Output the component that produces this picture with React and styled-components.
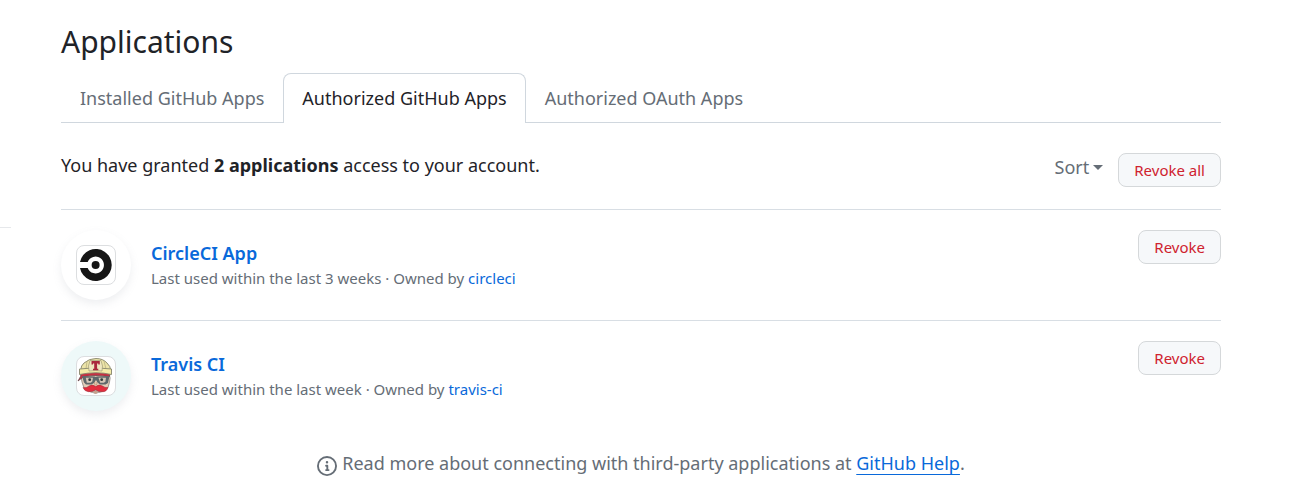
import React from "react";
import styled, { createGlobalStyle, css } from "styled-components";

const GlobalStyle = createGlobalStyle`
  *, *::before, *::after { box-sizing: border-box; }
  body {
    margin: 0;
    background: #ffffff;
    color: #1f2328;
    font-family: "Noto Sans", "Liberation Sans", sans-serif;
    font-size: 18px;
    line-height: 26px;
  }
`;

const Page = styled.div`
  display: grid;
  grid-template-columns: 11px minmax(0, 1fr);
  column-gap: 50px;
  padding-right: 93px;
`;

const SidebarEdge = styled.aside`
  padding-top: 227px;
`;

const SidebarRule = styled.hr`
  margin: 0;
  border: 0;
  border-top: 1px solid #e6e8eb;
`;

const Main = styled.main`
  padding-top: 20px;
`;

const Title = styled.h1`
  margin: 0 0 9px;
  font-size: 30px;
  font-weight: 400;
  line-height: 44px;
`;

const Tabs = styled.nav`
  display: flex;
  height: 50px;
  border-bottom: 1px solid #d0d7de;
`;

const Tab = styled.a`
  height: 50px;
  padding: 11px 18px;
  border: 1px solid transparent;
  border-bottom: 0;
  border-radius: 8px 8px 0 0;
  color: #656d76;
  text-decoration: none;
  white-space: nowrap;
  ${({ $active }) =>
    $active &&
    css`
      border-color: #d0d7de;
      background: #ffffff;
      color: #1f2328;
    `}
`;

const Summary = styled.div`
  display: flex;
  justify-content: space-between;
  align-items: flex-start;
  padding: 30px 0 22px;
`;

const SummaryText = styled.p`
  margin: 0;
  line-height: 24px;
`;

const Actions = styled.div`
  display: flex;
  align-items: center;
  gap: 15px;
`;

const SortButton = styled.button`
  display: flex;
  align-items: center;
  gap: 4px;
  padding: 0 0 6px;
  border: 0;
  background: none;
  color: #656d76;
  font: inherit;
  cursor: pointer;
`;

const Caret = styled.span`
  border: 5px solid transparent;
  border-top-color: currentColor;
  border-bottom: 0;
`;

const DangerButton = styled.button`
  height: 34px;
  padding: 0 15px;
  border: 1px solid #d5d8da;
  border-radius: 8px;
  background: #f6f8fa;
  color: #cf222e;
  font-family: inherit;
  font-size: 15px;
  line-height: 24px;
  cursor: pointer;
`;

const AppList = styled.ul`
  margin: 0;
  padding: 0;
  list-style: none;
`;

const AppRow = styled.li`
  display: flex;
  align-items: flex-start;
  padding: 20px 0;
  border-top: 1px solid #d8dee4;
`;

const Badge = styled.span`
  display: flex;
  flex: none;
  align-items: center;
  justify-content: center;
  width: 70px;
  height: 70px;
  margin-right: 20px;
  border-radius: 50%;
  background: ${({ $tint }) => $tint};
  box-shadow: 0 4px 8px rgba(140, 149, 159, 0.15);
`;

const LogoTile = styled.span`
  display: block;
  width: 40px;
  height: 40px;
  overflow: hidden;
  border: 1px solid #dcdee0;
  border-radius: 8px;
  background: #ffffff;

  svg { display: block; margin: -1px; }
`;

const AppInfo = styled.div`
  flex: 1;
  padding-top: 10px;
`;

const AppName = styled.a`
  display: block;
  width: fit-content;
  color: #0969da;
  font-weight: 600;
  text-decoration: none;
`;

const AppMeta = styled.p`
  margin: 0;
  color: #656d76;
  font-size: 15px;
  line-height: 24px;
`;

const OwnerLink = styled.a`
  color: #0969da;
  text-decoration: none;
`;

const Help = styled.footer`
  display: flex;
  align-items: flex-start;
  justify-content: center;
  gap: 5px;
  padding-top: 20px;
  color: #656d76;

  svg { flex: none; margin-top: 5px; }
  p { margin: 0; line-height: 24px; }
`;

const HelpLink = styled.a`
  color: #0969da;
  text-decoration: underline;
  text-decoration-thickness: 1px;
  text-underline-offset: 4px;
`;

const CircleLogo = () => (
  <svg width="40" height="40" viewBox="0 0 40 40" aria-hidden="true">
    <path
      fill="#161616"
      d="M4 17A16 16 0 1 1 4 23H11.7A8.4 8.4 0 1 0 11.7 17Z"
    />
    <circle cx="19.6" cy="20" r="4" fill="#161616" />
  </svg>
);

const TravisLogo = () => (
  <svg width="40" height="40" viewBox="0 0 40 40" aria-hidden="true">
    <path d="M6 18Q4.5 22 6 26Q7 32 11 34.5Q19.5 39 29 34.5Q33 32 33.5 26Q35 22 33 18Z" fill="#e3cdb8" stroke="#8b8580" strokeWidth=".8" />
    <path d="M8 30Q12 36 19.5 38Q27 36 31 30L27 35L20 33L13 35Z" fill="#b3aea8" />
    <path d="M5 17Q19 14 34 17L33.5 20.5Q19 18.5 8 20.5L2 25L4.5 20.5Z" fill="#c72f42" stroke="#5b4245" strokeWidth=".7" />
    <path d="M4.5 15Q5 9 8 7Q13 2.5 20 2.5Q27 2.5 31 7Q34.5 10 35 15Z" fill="#ece4a8" stroke="#85856c" strokeWidth=".9" />
    <path d="M11 5L10 13M28 5L30 13" fill="none" stroke="#b9b382" strokeWidth=".8" />
    <path d="M3.5 13Q19 10.5 35.5 13L35.5 18.5Q20 15 3.5 18.5Z" fill="#f4eca9" stroke="#85856c" strokeWidth=".9" />
    <path d="M12.5 10L14 4.5H25L26.5 10L26 15Q20 14 13 15Z" fill="#eee7c0" stroke="#96906c" strokeWidth=".6" />
    <path d="M15.5 5H23.8V8.5H22.3V7.5H21.1V12.7H22.3V14.3H17V12.7H18.2V7.5H17V8.5H15.5Z" fill="#a9283e" />
    <path d="M6 20L18.5 20.5L19.7 21L21 20.5L33.5 20L32 27L29.5 28.5H24L21.5 26.5L20 24L18 27L15.5 28.5H10L8 26.5Z" fill="#5f686b" />
    <path d="M9.8 21.8H17L16.3 25.5L14.8 26.8H10.8Z" fill="#d5c6b7" />
    <path d="M22.5 21.8H30L29.4 25.5L28 26.8H24.2Z" fill="#d5c6b7" />
    <circle cx="13.7" cy="23.7" r="1.4" fill="#303a3a" />
    <circle cx="25.7" cy="23.7" r="1.4" fill="#303a3a" />
    <path d="M18.5 26Q18 29 19.7 29Q21.5 29 21 26" fill="#e5c6ac" stroke="#a9866b" strokeWidth=".6" />
    <path d="M19.7 30.5Q23 28 26.5 30Q29 32 32 31.5Q30.5 36 26.5 35.7Q22 36 19.7 33.8Q17 36 12.5 35.7Q8.5 35.5 7 31.5Q10.5 32.5 13 30Q16.5 28 19.7 30.5Z" fill="#e22d3e" stroke="#9d2c37" strokeWidth=".5" />
    <path d="M17 35.7Q20 34.5 22 35.7L20.5 37.5H18.5Z" fill="#c9a08a" />
  </svg>
);

const InfoIcon = () => (
  <svg width="20" height="20" viewBox="0 0 16 16" fill="currentColor" aria-hidden="true">
    <path d="M0 8a8 8 0 1 1 16 0A8 8 0 0 1 0 8Zm8-6.5a6.5 6.5 0 1 0 0 13 6.5 6.5 0 0 0 0-13ZM6.5 7.75A.75.75 0 0 1 7.25 7h1a.75.75 0 0 1 .75.75v2.75h.25a.75.75 0 0 1 0 1.5h-2a.75.75 0 0 1 0-1.5h.25v-2h-.25a.75.75 0 0 1-.75-.75ZM8 6a1 1 0 1 1 0-2 1 1 0 0 1 0 2Z" />
  </svg>
);

const apps = [
  { name: "CircleCI App", used: "the last 3 weeks", owner: "circleci", tint: "#ffffff", Logo: CircleLogo },
  { name: "Travis CI", used: "the last week", owner: "travis-ci", tint: "#eef9f9", Logo: TravisLogo },
];

export default function App() {
  return (
    <>
      <GlobalStyle />
      <Page>
        <SidebarEdge>
          <SidebarRule />
        </SidebarEdge>
        <Main>
          <Title>Applications</Title>
          <Tabs aria-label="Applications">
            <Tab href="#installed">Installed GitHub Apps</Tab>
            <Tab href="#authorized" $active aria-current="page">Authorized GitHub Apps</Tab>
            <Tab href="#oauth">Authorized OAuth Apps</Tab>
          </Tabs>
          <Summary>
            <SummaryText>
              You have granted <strong>2 applications</strong> access to your account.
            </SummaryText>
            <Actions>
              <SortButton type="button" aria-haspopup="menu">
                Sort
                <Caret />
              </SortButton>
              <DangerButton type="button">Revoke all</DangerButton>
            </Actions>
          </Summary>
          <AppList>
            {apps.map(({ name, used, owner, tint, Logo }) => (
              <AppRow key={name}>
                <Badge $tint={tint}>
                  <LogoTile>
                    <Logo />
                  </LogoTile>
                </Badge>
                <AppInfo>
                  <AppName href={`#${owner}-app`}>{name}</AppName>
                  <AppMeta>
                    Last used within {used} · Owned by{" "}
                    <OwnerLink href={`#${owner}`}>{owner}</OwnerLink>
                  </AppMeta>
                </AppInfo>
                <DangerButton type="button" aria-label={`Revoke ${name}`}>Revoke</DangerButton>
              </AppRow>
            ))}
          </AppList>
          <Help>
            <InfoIcon />
            <p>
              Read more about connecting with third-party applications at{" "}
              <HelpLink href="#help">GitHub Help</HelpLink>.
            </p>
          </Help>
        </Main>
      </Page>
    </>
  );
}
